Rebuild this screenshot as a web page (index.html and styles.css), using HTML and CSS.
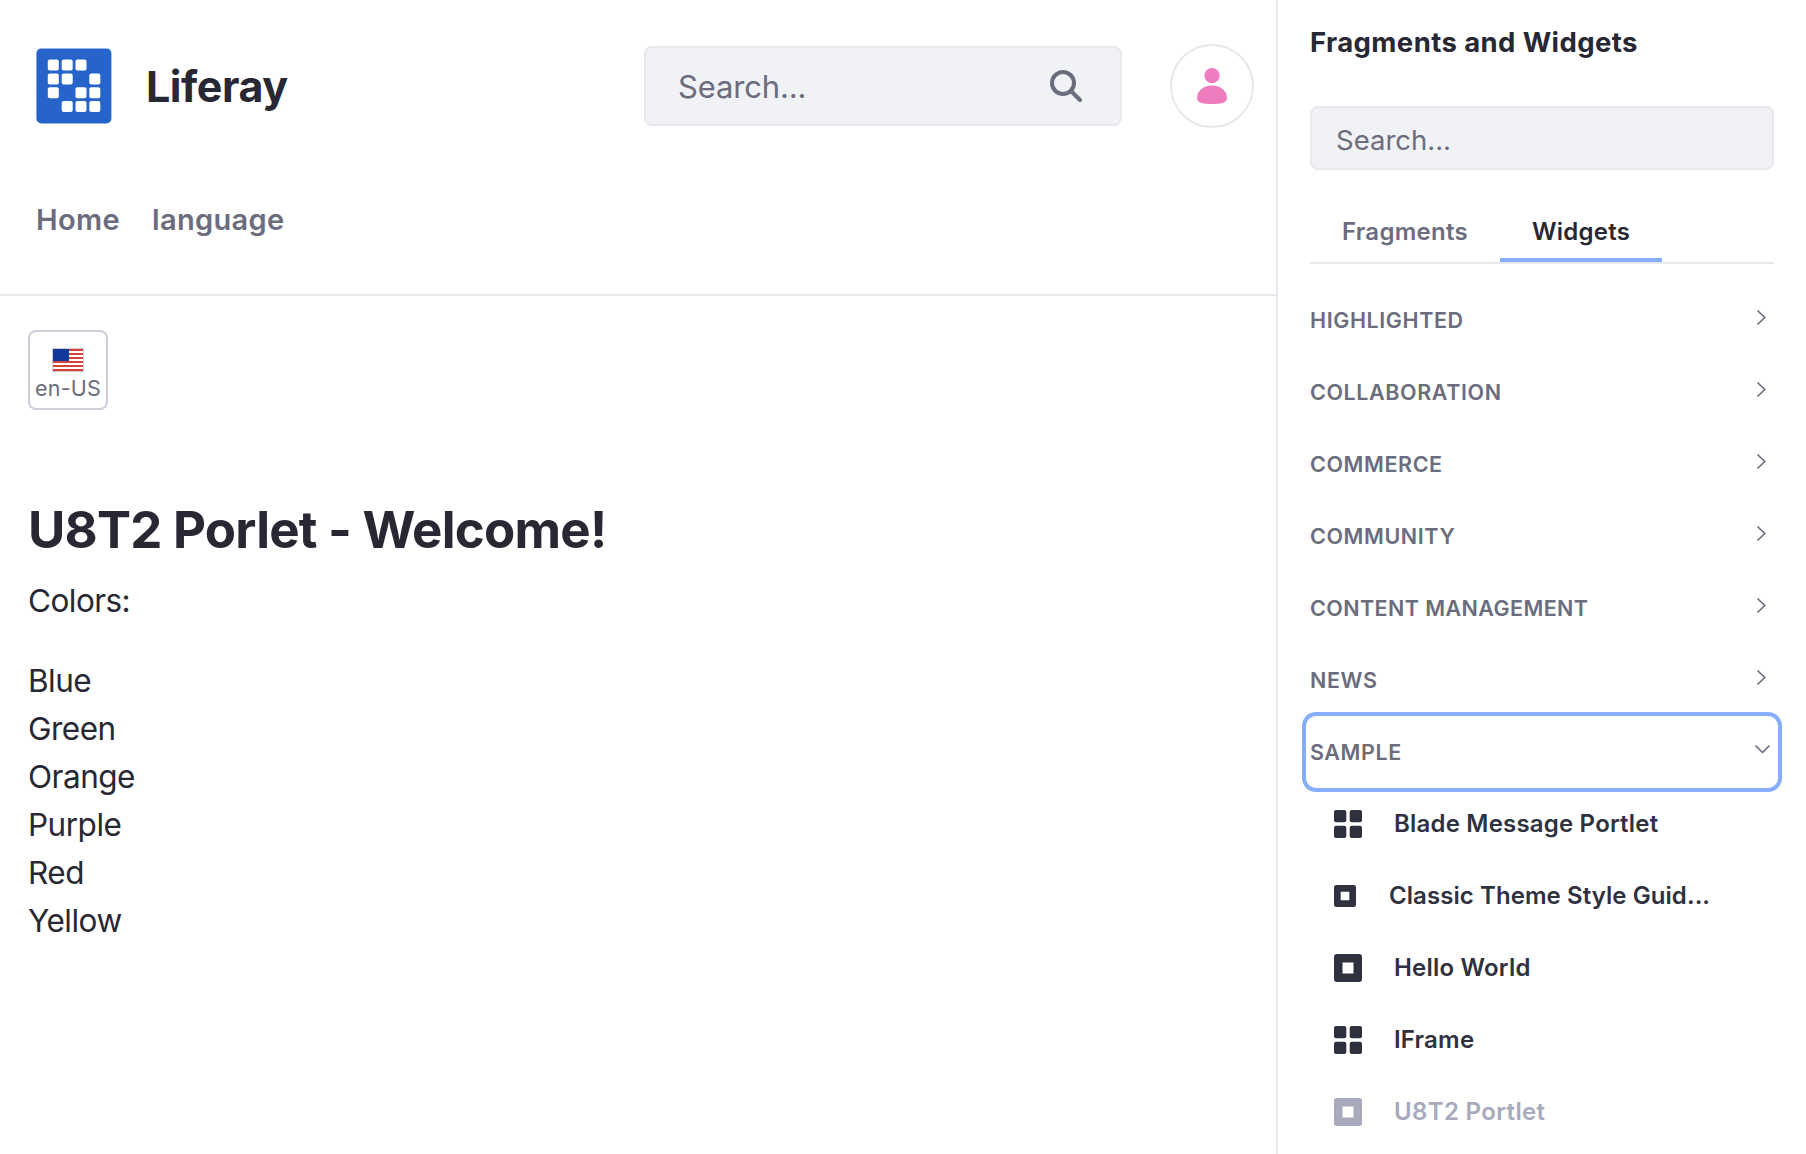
FILE: index.html
```html
<!DOCTYPE html>
<html lang="en">
<head>
<meta charset="utf-8">
<title>Liferay</title>
<link rel="stylesheet" href="styles.css">
</head>
<body>
<svg class="sprite" aria-hidden="true">
  <symbol id="chevron-right" viewBox="0 0 9 15"><path d="M1 1l6.800 6.500L1 14" fill="none" stroke="currentColor" stroke-width="1.700" stroke-linecap="round" stroke-linejoin="round"/></symbol>
  <symbol id="chevron-down" viewBox="0 0 15 9"><path d="M1 1l6.500 6.500L14 1" fill="none" stroke="currentColor" stroke-width="1.700" stroke-linecap="round" stroke-linejoin="round"/></symbol>
  <symbol id="grid" viewBox="0 0 28 28"><rect width="12.300" height="12.300" rx="2"/><rect x="15.700" width="12.300" height="12.300" rx="2"/><rect y="15.700" width="12.300" height="12.300" rx="2"/><rect x="15.700" y="15.700" width="12.300" height="12.300" rx="2"/></symbol>
  <symbol id="square-hole" viewBox="0 0 28 28"><path fill-rule="evenodd" d="M3 0h22a3 3 0 0 1 3 3v22a3 3 0 0 1-3 3H3a3 3 0 0 1-3-3V3a3 3 0 0 1 3-3zM8.500 8.500v11h11v-11z"/></symbol>
</svg>
<div class="page">
  <main class="main">
    <header class="header">
      <div class="header-top">
        <svg class="logo" viewBox="0 0 76 76">
          <rect x="0.400" y="0.400" width="75" height="75" rx="5" fill="#2764c9"/>
          <g fill="#fff">
            <rect x="11.800" y="11.600" width="11" height="11" rx="2"/><rect x="25.700" y="11.600" width="11" height="11" rx="2"/><rect x="39.500" y="11.600" width="11" height="11" rx="2"/>
            <rect x="11.800" y="25.400" width="11" height="11" rx="2"/><rect x="25.700" y="25.400" width="11" height="11" rx="2"/><rect x="53.300" y="25.400" width="11" height="11" rx="2"/>
            <rect x="11.800" y="39.200" width="11" height="11" rx="2"/><rect x="39.500" y="39.200" width="11" height="11" rx="2"/><rect x="53.300" y="39.200" width="11" height="11" rx="2"/>
            <rect x="25.700" y="53.100" width="11" height="11" rx="2"/><rect x="39.500" y="53.100" width="11" height="11" rx="2"/><rect x="53.300" y="53.100" width="11" height="11" rx="2"/>
          </g>
        </svg>
        <span class="site-name">Liferay</span>
        <div class="search">
          <span class="search-text">Search...</span>
          <svg class="search-icon" viewBox="0 0 32 32"><circle cx="13" cy="13" r="11" fill="none" stroke="currentColor" stroke-width="4"/><path d="M21 21l9 9" stroke="currentColor" stroke-width="4" stroke-linecap="round"/></svg>
        </div>
        <div class="avatar">
          <svg class="avatar-icon" viewBox="0 0 30 36"><circle cx="15" cy="7.700" r="7.600"/><path d="M15 17.500c-8.500 0-15 5.500-15 12.500 0 4.500 5 6 15 6s15-1.500 15-6c0-7-6.500-12.500-15-12.500z"/></svg>
        </div>
      </div>
      <nav class="nav"><a>Home</a><a>language</a></nav>
    </header>
    <section class="content">
      <div class="language">
        <svg class="flag" viewBox="0 0 32 24" shape-rendering="crispEdges">
          <rect width="32" height="24" fill="#cdced9"/><rect x="1" y="1" width="30" height="22" fill="#fff"/>
          <path fill="#d4433b" d="M1 1h30v2H1zM1 5h30v2H1zM1 9h30v2H1zM1 13h30v2H1zM1 17h30v2H1zM1 21h30v2H1z"/>
          <rect x="1" y="1" width="16" height="12" fill="#10399b"/>
        </svg>
        <span class="language-code">en-US</span>
      </div>
      <h1 class="welcome">U8T2 Porlet - Welcome!</h1>
      <p class="label">Colors:</p>
      <ul class="colors"><li>Blue</li><li>Green</li><li>Orange</li><li>Purple</li><li>Red</li><li>Yellow</li></ul>
    </section>
  </main>
  <aside class="sidebar">
    <h2 class="sidebar-title">Fragments and Widgets</h2>
    <div class="sidebar-search">Search...</div>
    <div class="tabs"><a class="tab">Fragments</a><a class="tab tab-active">Widgets</a></div>
    <div class="panels">
      <div class="panel"><span>HIGHLIGHTED</span><svg class="chevron-right"><use href="#chevron-right"/></svg></div>
      <div class="panel"><span>COLLABORATION</span><svg class="chevron-right"><use href="#chevron-right"/></svg></div>
      <div class="panel"><span>COMMERCE</span><svg class="chevron-right"><use href="#chevron-right"/></svg></div>
      <div class="panel"><span>COMMUNITY</span><svg class="chevron-right"><use href="#chevron-right"/></svg></div>
      <div class="panel"><span>CONTENT MANAGEMENT</span><svg class="chevron-right"><use href="#chevron-right"/></svg></div>
      <div class="panel"><span>NEWS</span><svg class="chevron-right"><use href="#chevron-right"/></svg></div>
      <div class="panel panel-open"><span>SAMPLE</span><svg class="chevron-down"><use href="#chevron-down"/></svg></div>
    </div>
    <div class="widgets">
      <div class="widget"><svg class="widget-icon"><use href="#grid"/></svg><span>Blade Message Portlet</span></div>
      <div class="widget widget-long"><svg class="widget-icon"><use href="#square-hole"/></svg><span>Classic Theme Style Guid...</span></div>
      <div class="widget"><svg class="widget-icon"><use href="#square-hole"/></svg><span>Hello World</span></div>
      <div class="widget"><svg class="widget-icon"><use href="#grid"/></svg><span>IFrame</span></div>
      <div class="widget widget-used"><svg class="widget-icon"><use href="#square-hole"/></svg><span>U8T2 Portlet</span></div>
    </div>
  </aside>
</div>
</body>
</html>
```

FILE: styles.css
```css
* { box-sizing: border-box; }
body {
  margin: 0;
  background: #fff;
  color: #272833;
  font-family: Inter, "Liberation Sans", sans-serif;
}
.sprite { display: none; }
.page { display: flex; width: 1806px; height: 1154px; overflow: hidden; }
.main { width: 1276px; }
.header { height: 296px; padding: 44px 22px 0 36px; border-bottom: 2px solid #e7e7ed; }
.header-top { display: flex; align-items: center; height: 84px; }
.logo { width: 76px; height: 76px; }
.site-name { margin-left: 34px; font-size: 43px; font-weight: 700; line-height: 52px; letter-spacing: -0.45px; }
.search {
  display: flex; align-items: center; justify-content: space-between;
  width: 478px; height: 80px; margin-left: auto; padding: 0 38px 0 32px;
  border: 2px solid #e7e7ed; border-radius: 8px; background: #f1f2f5; color: #6b6c7e;
}
.search-text { font-size: 31px; letter-spacing: -0.15px; }
.search-icon { width: 32px; height: 32px; }
.avatar {
  display: flex; align-items: center; justify-content: center;
  width: 84px; height: 84px; margin-left: 48px; border: 2px solid #e7e7ed; border-radius: 50%;
}
.avatar-icon { width: 30px; height: 36px; fill: #ee7cbf; }
.nav { display: flex; gap: 32px; padding-top: 72px; color: #6b6c7e; font-size: 29px; font-weight: 600; line-height: 40px; letter-spacing: 0.35px; }
.content { padding: 34px 28px 0; }
.language {
  display: flex; flex-direction: column; align-items: center;
  width: 80px; height: 80px; padding-top: 16px;
  border: 2px solid #cdced9; border-radius: 8px; color: #6b6c7e;
}
.flag { width: 32px; height: 24px; }
.language-code { margin-top: 2px; font-size: 21.5px; line-height: 28px; letter-spacing: 0.2px; }
.welcome { margin: 90px 0 17px; font-size: 51px; font-weight: 700; line-height: 60px; letter-spacing: -0.76px; }
.label { margin: 0 0 32px; font-size: 31.5px; line-height: 48px; letter-spacing: -0.55px; }
.colors { margin: 0; padding: 0; list-style: none; font-size: 31.5px; line-height: 48px; letter-spacing: -0.5px; }
.sidebar { width: 530px; padding: 22px 32px 0; border-left: 2px solid #e7e7ed; }
.sidebar-title { margin: 0 0 44px; font-size: 27.5px; font-weight: 700; line-height: 40px; letter-spacing: 0.4px; }
.sidebar-search {
  display: flex; align-items: center; width: 464px; height: 64px; padding: 4px 0 0 24px;
  border: 2px solid #e7e7ed; border-radius: 8px; background: #f1f2f5; color: #6b6c7e; font-size: 27.5px;
}
.tabs { display: flex; width: 464px; height: 62px; margin-top: 32px; border-bottom: 2px solid #e7e7ed; color: #6b6c7e; font-size: 24px; font-weight: 600; line-height: 28px; letter-spacing: 0.25px; }
.tab { width: 190px; height: 60px; padding: 16px 32px 0; }
.tab-active { width: 162px; border-bottom: 4px solid #87aefb; color: #272833; }
.panels { width: 464px; padding-top: 20px; }
.panel { display: flex; align-items: center; justify-content: space-between; height: 72px; padding-right: 8px; color: #6b6c7e; font-size: 21.5px; font-weight: 600; letter-spacing: 0.6px; }
.panel:nth-child(5) { letter-spacing: 0.42px; }
.chevron-right { width: 9px; height: 15px; margin-bottom: 5px; }
.chevron-down { width: 15px; height: 9px; margin-bottom: 5px; }
.panel-open { margin: 0 -4px; padding: 0 8px 0 4px; border-radius: 10px; box-shadow: 0 0 0 4px #87aefb; }
.widgets { padding-left: 24px; }
.widget { display: flex; align-items: center; height: 72px; color: #30313f; fill: currentColor; font-size: 24px; font-weight: 600; letter-spacing: 0.2px; }
.widget span { padding-bottom: 2px; }
.widget-icon { width: 28px; height: 28px; margin-right: 32px; }
.widget-long { letter-spacing: 0.07px; }
.widget-long .widget-icon { width: 22px; height: 22px; margin-right: 33px; }
.widget-used { color: #a7a9bc; letter-spacing: 0.35px; }
```
